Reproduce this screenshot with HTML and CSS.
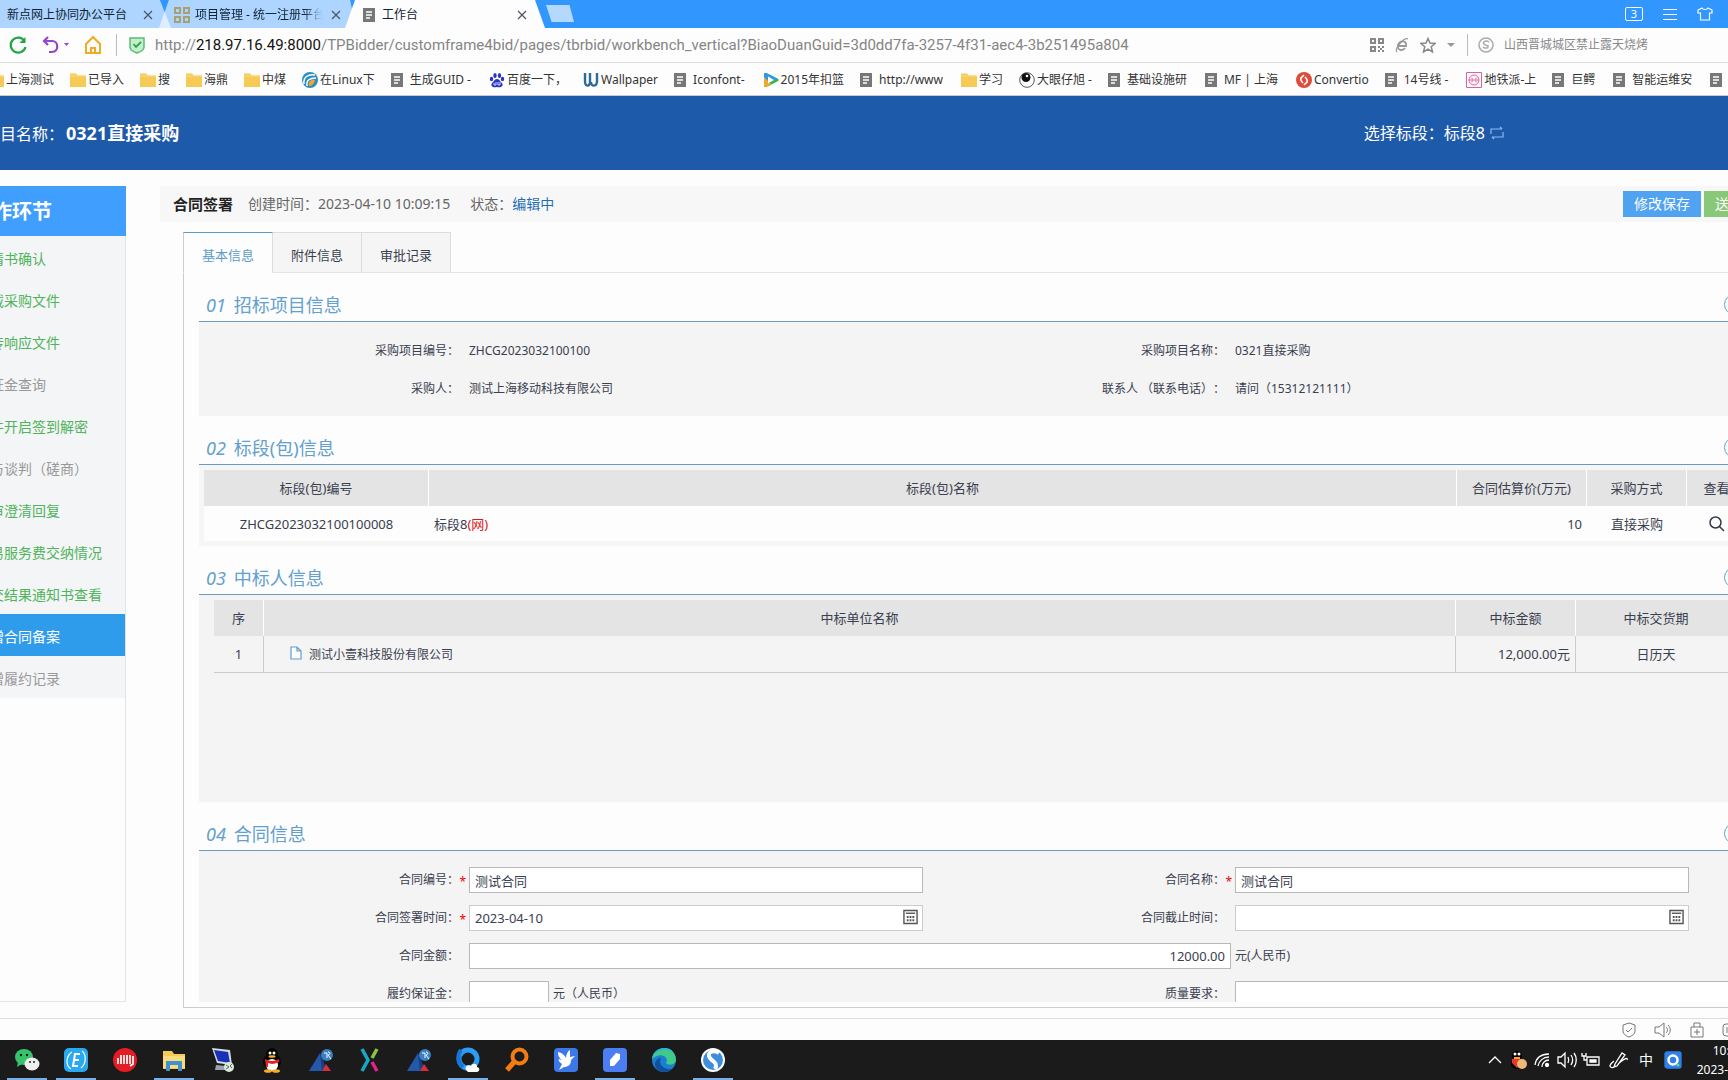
FILE: index.html
```html
<!DOCTYPE html>
<html lang="zh-CN">
<head>
<meta charset="utf-8">
<title>工作台</title>
<link rel="stylesheet" href="styles.css">
</head>
<body>
<svg class="defs" aria-hidden="true">
  <symbol id="doc" viewBox="0 0 16 16"><path d="M2 1h12v14H2z" fill="#777"/><path d="M5 5h6M5 8h6M5 11h4" stroke="#fff" stroke-width="1.4"/></symbol>
  <symbol id="folder" viewBox="0 0 16 16"><path d="M0 1.500h6l2 2h8V15H0z" fill="#f5cb55"/><path d="M0 4h16" stroke="#f9dc85"/></symbol>
  <symbol id="close" viewBox="0 0 10 10"><path d="M1 1l8 8M9 1L1 9" stroke="#4b5563" stroke-width="1.200" fill="none"/></symbol>
  <symbol id="cal" viewBox="0 0 16 16"><path d="M1 1h14v14H1z" fill="#fff" stroke="#555" stroke-width="1.500"/><path d="M3 4h10" stroke="#555" stroke-width="1.500"/><path d="M4 8h8M4 11.500h8" stroke="#555" stroke-width="2" stroke-dasharray="2 1"/></symbol>
  <symbol id="delta" viewBox="0 0 26 26"><path d="M1 24L12 6l7 18z" fill="#2458a8"/><path d="M12 6l7 18h-5z" fill="#173e80"/><path d="M14 24l4-7 5 7z" fill="#d5303c"/><circle cx="19" cy="8" r="6" fill="#3a7fc0"/><path d="M16 6h3v5M20 5c3 0 2 3 0 3l3 4" stroke="#fff" fill="none"/></symbol>
</svg>

<header class="browser">
  <div class="tabstrip">
    <div class="btab btab-first"><svg class="fav"><use href="#doc"/></svg><span>新点网上协同办公平台</span><button class="x" aria-label="关闭"><svg><use href="#close"/></svg></button></div>
    <div class="btab btab-second"><svg class="fav" viewBox="0 0 16 16" fill="none" stroke="#a8a070" stroke-width="2"><path d="M1 1h5v5H1zM10 1h5v5h-5zM1 10h5v5H1zM10 10h5v5h-5z"/></svg><span class="fade">项目管理 - 统一注册平台</span><button class="x" aria-label="关闭"><svg><use href="#close"/></svg></button></div>
    <div class="btab btab-active"><svg class="fav"><use href="#doc"/></svg><span>工作台</span><button class="x" aria-label="关闭"><svg><use href="#close"/></svg></button></div>
    <button class="newtab" aria-label="新标签"></button>
    <div class="wincontrols">
      <button class="count">3</button>
      <button aria-label="菜单"><svg width="14" height="14" viewBox="0 0 14 14" stroke="#fff"><path d="M0 2.500h14M0 7.500h14M0 12.500h14"/></svg></button>
      <button aria-label="皮肤"><svg width="16" height="14" viewBox="0 0 16 14" fill="none" stroke="#fff" stroke-width="1.200"><path d="M5 1L1 3v3h2.500v7h9V6H15V3l-4-2c-1 2-5 2-6 0z"/></svg></button>
    </div>
  </div>
  <div class="addressbar">
    <button aria-label="刷新"><svg width="20" height="20" viewBox="0 0 20 20" fill="none" stroke="#22a447" stroke-width="2.200"><path d="M16.500 6A7.500 7.500 0 1 0 17.500 12"/><path d="M17.500 2v6h-6z" fill="#22a447" stroke="none"/></svg></button>
    <button aria-label="撤销"><svg width="28" height="20" viewBox="0 0 28 20" fill="none" stroke="#9445c9" stroke-width="2.200"><path d="M6 2L2 6l4 4M2 6h8c7 0 7 11 0 11H7"/><path d="M22 8h5l-2.500 3z" fill="#9445c9" stroke="none"/></svg></button>
    <button aria-label="主页"><svg width="18" height="20" viewBox="0 0 18 20" fill="none" stroke="#f0ab25" stroke-width="2"><path d="M2 9l7-7 7 7v9H2zM7 18v-5h4v5"/></svg></button>
    <i class="vline"></i>
    <svg width="16" height="18" viewBox="0 0 16 18"><path d="M1 2h14v9c0 3-4 5-7 6-3-1-7-3-7-6z" fill="#c4efce" stroke="#58bd70" stroke-width="1.500"/><path d="M4.500 8L7 11l5-5" fill="none" stroke="#2fa34c" stroke-width="1.800"/></svg>
    <a class="url" href="#">http://<b>218.97.16.49:8000</b>/TPBidder/customframe4bid/pages/tbrbid/workbench_vertical?BiaoDuanGuid=3d0dd7fa-3257-4f31-aec4-3b251495a804</a>
    <div class="addr-tools">
      <svg width="14" height="14" viewBox="0 0 14 14" fill="none" stroke="#888" stroke-width="2"><path d="M1 1h4v4H1zM9 1h4v4H9zM1 9h4v4H1zM8 9h2M12 9h2M10 11h2M8 13h2M12 13h2"/></svg>
      <svg width="14" height="16" viewBox="0 0 14 16" fill="none" stroke="#999" stroke-width="1.800"><path d="M3 9h8c1-6-6-6-8-1-1 6 5 6 7 3"/><path d="M2 15C-1 12 9 0 13 2" stroke-width="1.200"/></svg>
      <svg width="16" height="16" viewBox="0 0 16 16" fill="none" stroke="#888" stroke-width="1.500"><path d="M8 1.500l2 4.500 5 .5-3.800 3.200L12.500 15 8 12.200 3.500 15l1.300-5.300L1 6.500 6 6z"/></svg>
      <svg width="8" height="6" viewBox="0 0 8 6"><path d="M0 1h8L4 5z" fill="#999"/></svg>
    </div>
    <div class="search">
      <svg width="16" height="16" viewBox="0 0 16 16" fill="none" stroke="#aaa" stroke-width="1.500"><circle cx="8" cy="8" r="7"/><path d="M11 5C8 3 4 5 6 7s5 1 4 3-4 1-5 0"/></svg>
      <input aria-label="搜索" value="山西晋城城区禁止露天烧烤">
    </div>
  </div>
  <nav class="bookmarks">
    <a href="#"><svg><use href="#folder"/></svg>上海测试</a>
    <a href="#"><svg><use href="#folder"/></svg>已导入</a>
    <a href="#"><svg><use href="#folder"/></svg>搜</a>
    <a href="#"><svg><use href="#folder"/></svg>海鼎</a>
    <a href="#"><svg><use href="#folder"/></svg>中煤</a>
    <a href="#"><svg viewBox="0 0 16 16"><circle cx="8" cy="8" r="8" fill="#2a8fc4"/><path d="M2 12C1 5 6 2 13 3M5 14C4 8 8 6 14 6" stroke="#fff" stroke-width="1.500" fill="none"/><path d="M7 14c-1-4 2-7 6-6-1 4-3 6-6 6z" fill="#f3a52c"/></svg>在Linux下</a>
    <a class="page" href="#"><svg><use href="#doc"/></svg>生成GUID -</a>
    <a href="#"><svg viewBox="0 0 16 16" fill="#2a35c8"><ellipse cx="6" cy="3.500" rx="1.700" ry="2.500"/><ellipse cx="10.500" cy="3.500" rx="1.700" ry="2.500"/><ellipse cx="2.500" cy="7" rx="1.700" ry="2.300"/><ellipse cx="13.500" cy="7" rx="1.700" ry="2.300"/><path d="M8 7c3 0 3 3 5 4 2 3-1 5-5 4-4 1-7-1-5-4 2-1 2-4 5-4z"/><path d="M7 10v3H5v-2M9 10v3h2v-3" stroke="#fff" fill="none" stroke-width=".8"/></svg>百度一下，</a>
    <a href="#"><svg viewBox="0 0 16 16" fill="none" stroke="#2d6a9c" stroke-width="2.400"><path d="M2 1v8c0 6 5 6 5 1V1M8 10c0 5 6 5 6-1V1"/></svg>Wallpaper</a>
    <a class="page" href="#"><svg><use href="#doc"/></svg>Iconfont-</a>
    <a href="#"><svg viewBox="0 0 16 16"><path d="M1 1.500C2 0 4 1 15 7c1 1 1 1 0 2C4 15 2 16 1 14.500z" fill="#35b24a"/><path d="M1 1.500C2 0 4 1 15 7l-4 1-10 2z" fill="#2b9be8"/><path d="M1 5v9.500C2 16 5 14 8 12z" fill="#f7a823"/><path d="M5 4.500v7L11 8z" fill="#fff"/></svg>2015年扣篮</a>
    <a class="page" href="#"><svg><use href="#doc"/></svg>http://www</a>
    <a href="#"><svg><use href="#folder"/></svg>学习</a>
    <a href="#"><svg viewBox="0 0 16 16"><circle cx="8" cy="8" r="7.300" fill="#fff" stroke="#555"/><circle cx="7" cy="5.500" r="4.500" fill="#111"/><circle cx="8" cy="4" r="1.300" fill="#fff"/></svg>大眼仔旭 -</a>
    <a class="page" href="#"><svg><use href="#doc"/></svg>基础设施研</a>
    <a class="page" href="#"><svg><use href="#doc"/></svg>MF | 上海</a>
    <a href="#"><svg viewBox="0 0 16 16"><circle cx="8" cy="8" r="8" fill="#dd4b3a"/><path d="M8 3L5 6c-1 2 0 3 2 5M8 13l3-3c1-2 0-3-2-5" stroke="#fff" stroke-width="1.700" fill="none"/></svg>Convertio</a>
    <a class="page" href="#"><svg><use href="#doc"/></svg>14号线 -</a>
    <a href="#"><svg viewBox="0 0 16 16" fill="none" stroke="#e0609a"><path d="M.5.5h15v15H.5z"/><circle cx="8" cy="8" r="5"/><path d="M6 5.500v5M10 5.500v5M6 8h4M3 8h2M11 8h2"/></svg>地铁派-上</a>
    <a class="page" href="#"><svg><use href="#doc"/></svg>巨鳄</a>
    <a class="page" href="#"><svg><use href="#doc"/></svg>智能运维安</a>
    <a class="page" href="#"><svg><use href="#doc"/></svg>长三角</a>
  </nav>
</header>

<div class="app">
  <header class="apphead">
    <div class="project">项目名称：<strong>0321直接采购</strong></div>
    <div class="lot">选择标段：标段8 <button aria-label="切换标段"><svg width="14" height="14" viewBox="0 0 14 14" fill="none" stroke="#8db9ee" stroke-width="1.200"><path d="M1 8V3h11M10 1l2 2M13 6v5H2M4 13l-2-2"/></svg></button></div>
  </header>

  <div class="workspace">
    <aside class="side">
      <h2>操作环节</h2>
      <nav>
        <a class="done" href="#">邀请书确认</a>
        <a class="done" href="#">下载采购文件</a>
        <a class="done" href="#">上传响应文件</a>
        <a href="#">保证金查询</a>
        <a class="done" href="#">文件开启签到解密</a>
        <a href="#">参与谈判（磋商）</a>
        <a class="done" href="#">评审澄清回复</a>
        <a class="done" href="#">交易服务费交纳情况</a>
        <a class="done" href="#">成交结果通知书查看</a>
        <a class="current" href="#">新增合同备案</a>
        <a href="#">新增履约记录</a>
      </nav>
    </aside>

    <main class="main">
      <div class="titlebar">
        <h1>合同签署</h1>
        <span>创建时间：2023-04-10 10:09:15</span>
        <span class="state">状态：<em>编辑中</em></span>
        <div class="actions"><button class="save">修改保存</button><button class="submit">送审</button></div>
      </div>
      <div class="ptabs">
        <button class="on">基本信息</button><button>附件信息</button><button>审批记录</button>
      </div>
      <div class="panel">
        <div class="scroll">
          <section>
            <h3><i>01</i>招标项目信息<button class="fold" aria-label="收起"></button></h3>
            <dl class="form">
              <dt>采购项目编号：</dt><dd>ZHCG2023032100100</dd>
              <dt>采购项目名称：</dt><dd>0321直接采购</dd>
              <dt>采购人：</dt><dd>测试上海移动科技有限公司</dd>
              <dt>联系人 （联系电话）：</dt><dd>请问（15312121111）</dd>
            </dl>
          </section>
          <section>
            <h3><i>02</i>标段(包)信息<button class="fold" aria-label="收起"></button></h3>
            <div class="lots">
              <table>
                <colgroup><col class="c-code"><col><col class="c-price"><col class="c-way"><col class="c-view"></colgroup>
                <thead><tr><th>标段(包)编号</th><th>标段(包)名称</th><th>合同估算价(万元)</th><th>采购方式</th><th>查看</th></tr></thead>
                <tbody><tr><td class="mid">ZHCG2023032100100008</td><td>标段8<span class="net">(网)</span></td><td class="end">10</td><td class="mid">直接采购</td><td class="mid"><button aria-label="查看"><svg width="16" height="16" viewBox="0 0 16 16" fill="none" stroke="#333a48" stroke-width="1.500"><circle cx="6.500" cy="6.500" r="5.500"/><path d="M10.500 10.500L15 15"/></svg></button></td></tr></tbody>
              </table>
            </div>
          </section>
          <section>
            <h3><i>03</i>中标人信息<button class="fold" aria-label="收起"></button></h3>
            <div class="winners">
              <table>
                <colgroup><col class="c-no"><col><col class="c-sum"><col class="c-date"></colgroup>
                <thead><tr><th>序</th><th>中标单位名称</th><th>中标金额</th><th>中标交货期</th></tr></thead>
                <tbody><tr><td class="mid">1</td><td class="company"><svg width="12" height="14" viewBox="0 0 12 14" fill="#fff" stroke="#5b9fd0" stroke-width="1.200"><path d="M1 1h6l4 4v8H1zM7 1v4h4"/></svg>测试小壹科技股份有限公司</td><td class="end">12,000.00元</td><td class="mid">日历天</td></tr></tbody>
              </table>
              <div class="pager">…</div>
            </div>
          </section>
          <section>
            <h3><i>04</i>合同信息<button class="fold" aria-label="收起"></button></h3>
            <form class="form">
              <label for="no">合同编号：<b>*</b></label><div class="field"><input id="no" value="测试合同"></div>
              <label for="name">合同名称：<b>*</b></label><div class="field"><input id="name" value="测试合同"></div>
              <label for="sign">合同签署时间：<b>*</b></label><div class="field date"><input id="sign" value="2023-04-10"><svg><use href="#cal"/></svg></div>
              <label for="end">合同截止时间：</label><div class="field date"><input id="end"><svg><use href="#cal"/></svg></div>
              <label for="sum">合同金额：</label><div class="field amount"><input id="sum" value="12000.00"></div><span class="unit">元(人民币)</span>
              <label for="bond">履约保证金：</label><div class="field bond"><input id="bond"><span>元（人民币）</span></div>
              <label for="quality">质量要求：</label><div class="field full"><input id="quality"></div>
            </form>
          </section>
        </div>
      </div>
    </main>
  </div>
</div>

<div class="statusbar">
  <svg width="16" height="16" viewBox="0 0 16 16"><path d="M8 1l6 2v6c0 3-3 5-6 6-3-1-6-3-6-6V3zM5 8l2 2 4-4"/></svg>
  <svg width="18" height="16" viewBox="0 0 18 16"><path d="M1 5h4l5-4v14l-5-4H1zM12 5c2 2 2 4 0 6M14 3c3 3 3 7 0 10"/></svg>
  <svg width="16" height="16" viewBox="0 0 16 16"><path d="M2 5h12v10H2zM5 5V1h6v4M8 7v6M5 10h6"/></svg>
  <svg width="16" height="16" viewBox="0 0 16 16"><rect x="1" y="2" width="14" height="12" rx="3"/><path d="M5 5v6"/></svg>
</div>

<footer class="taskbar">
  <div class="tasks">
    <button class="run" aria-label="微信"><svg viewBox="0 0 26 26"><ellipse cx="10" cy="10" rx="9" ry="8" fill="#35c46b"/><path d="M4 15l-1 5 5-3z" fill="#35c46b"/><ellipse cx="18" cy="17" rx="7.500" ry="6.500" fill="#eee"/><g fill="#222"><circle cx="7" cy="8" r="1.200"/><circle cx="13" cy="8" r="1.200"/><circle cx="16" cy="15" r="1"/><circle cx="20" cy="15" r="1"/></g></svg></button>
    <button class="run" aria-label="E"><svg viewBox="0 0 26 26"><rect x="1" y="1" width="24" height="24" rx="5" fill="#28a9f0"/><path d="M17 7h-5l-2 12h5M11 13h5" stroke="#fff" stroke-width="2" fill="none"/><path d="M9 5c-7 5-6 14-1 17M18 21c6-5 5-14 1-17" stroke="#fff" stroke-width="1.200" fill="none"/></svg></button>
    <button aria-label="红色应用"><svg viewBox="0 0 26 26"><circle cx="13" cy="13" r="12" fill="#e51c23"/><path d="M6 11v6M9 8v9M12 8v9M15 8v9M18 8v9M21 9v8l-3 2" stroke="#fff" stroke-width="1.700" fill="none"/></svg></button>
    <button class="run" aria-label="文件资源管理器"><svg viewBox="0 0 26 26"><path d="M2 4h9l2 3h11v15H2z" fill="#f6cb55"/><path d="M2 9h22v12H2z" fill="#fbdc7c"/><path d="M5 24V14h16v10h-4v-6H9v6z" fill="#3e93d0"/></svg></button>
    <button aria-label="远程桌面"><svg viewBox="0 0 26 26"><path d="M2 1l18 2 2 15-15-2z" fill="#d5dae0"/><path d="M4 3l14 2 2 11-12-2z" fill="#1732b8"/><path d="M6 18l10 1 3 4H5z" fill="#9aa3ad"/><circle cx="19" cy="20" r="5" fill="#dfe6df"/><path d="M16 18l3 2-3 2M22 17l-2 2 2 2" stroke="#4a7a4a" fill="none"/></svg></button>
    <button aria-label="QQ"><svg viewBox="0 0 26 26"><ellipse cx="13" cy="15" rx="9" ry="8" fill="#060606"/><ellipse cx="13" cy="8" rx="6" ry="7" fill="#060606"/><ellipse cx="13" cy="18" rx="6" ry="6" fill="#fff"/><circle cx="11" cy="6" r="1.500" fill="#fff"/><circle cx="15" cy="6" r="1.500" fill="#fff"/><ellipse cx="13" cy="9.500" rx="3.500" ry="1.300" fill="#f7ae24"/><path d="M6 12q7 4 14 0v3q-4 2-7 2l-4-1v4H7z" fill="#e52222"/><ellipse cx="9" cy="24" rx="4" ry="1.800" fill="#f7ae24"/><ellipse cx="17" cy="24" rx="4" ry="1.800" fill="#f7ae24"/></svg></button>
    <button aria-label="开发工具"><svg><use href="#delta"/></svg></button>
    <button aria-label="X"><svg viewBox="0 0 26 26" fill="none" stroke-width="3.500"><path d="M5 2l6 11-6 11" stroke="#18a7c4"/><path d="M20 2l-5 9" stroke="#8bc53f"/><path d="M15 15l5 9" stroke="#e6228e"/></svg></button>
    <button aria-label="开发工具"><svg><use href="#delta"/></svg></button>
    <button class="run" aria-label="浏览器"><svg viewBox="0 0 26 26"><circle cx="13" cy="12" r="9" fill="none" stroke="#2a9df4" stroke-width="5"/><path d="M6 3C2 8 3 16 8 20" fill="none" stroke="#1575d8" stroke-width="4"/><path d="M12 24c-4-4 1-7 4-5 2-4 7-2 6 1 4 1 2 5 0 5h-9z" fill="#fff"/></svg></button>
    <button aria-label="搜索"><svg viewBox="0 0 26 26" fill="none" stroke="#f57c12"><circle cx="15.500" cy="9.500" r="7" stroke-width="4"/><path d="M10 15l-7 8" stroke-width="5"/></svg></button>
    <button aria-label="飞鸟"><svg viewBox="0 0 26 26"><rect x="1" y="1" width="24" height="24" rx="4" fill="#3c78e8"/><path d="M5 5c5 1 7 4 8 6 0-4 2-7 4-8v7l5-1-4 4c0 5-3 7-7 7l-5 3 3-6c-3-2-4-4-3-5l3 1C6 11 5 9 5 5z" fill="#fff"/></svg></button>
    <button class="run" aria-label="笔记"><svg viewBox="0 0 26 26"><rect x="1" y="1" width="24" height="24" rx="4" fill="#4d7df2"/><path d="M8 19v-6l6-7 4 1v5l-6 7z" fill="#fff"/></svg></button>
    <button aria-label="Edge"><svg viewBox="0 0 26 26"><circle cx="13" cy="13" r="12" fill="#1b7fd0"/><path d="M1 12C3-3 25-2 25 13c0 5-8 6-10 3 4-6-6-12-14-4z" fill="#3fc98a"/><path d="M1 11C4-1 19-1 22 5c-8-4-17-2-21 6z" fill="#2cb5d5"/><path d="M10 11c-3 6 2 12 11 11C12 29 3 22 4 16c1-3 3-5 6-5z" fill="#12509e"/></svg></button>
    <button class="run" aria-label="搜狗浏览器"><svg viewBox="0 0 26 26"><circle cx="13" cy="13" r="12" fill="#fff"/><circle cx="13" cy="13" r="10" fill="#3d8edb"/><path d="M19 6C13 2 6 6 10 11s8 5 5 11" stroke="#fff" stroke-width="4" fill="none"/></svg></button>
  </div>
  <div class="tray">
    <svg viewBox="0 0 20 20"><path d="M4 13l6-6 6 6"/></svg>
    <svg viewBox="0 0 20 20" stroke="none"><ellipse cx="8" cy="6" rx="5" ry="5" fill="#000" stroke="none"/><ellipse cx="8" cy="14" rx="6" ry="5" fill="#000" stroke="none"/><circle cx="6" cy="4" r="1.500" fill="#fff" stroke="none"/><circle cx="10" cy="4" r="1.500" fill="#fff" stroke="none"/><path d="M3 9h10v3l-5 6-5-5z" fill="#e43a2c" stroke="none"/><circle cx="13" cy="14" r="5" fill="#f0b878" stroke="none"/><path d="M5 7h6v2H5z" fill="#f6a81c" stroke="none"/></svg>
    <svg viewBox="0 0 20 20"><path d="M2 15C3 8 8 4 16 4M5 16c1-5 5-9 11-9M9 17c0-4 3-7 7-7"/><circle cx="14" cy="15" r="1.500" fill="#fff"/></svg>
    <svg viewBox="0 0 20 20"><path d="M1 7h3l4-4v14l-4-4H1zM11 7c1 2 1 4 0 6M14 5c2 3 2 7 0 10M17 3c3 4 3 10 0 14"/></svg>
    <svg viewBox="0 0 20 20"><path d="M6 7h12v8H6zM1 3v3h4V3M3 6v4h3"/><path d="M9 10h6v2H9z" fill="#fff"/></svg>
    <svg class="pen" viewBox="0 0 20 20"><path d="M6 14L13 3l3 2-8 11-3 1zM9 14c7-6 10-7 9-4M5 11c-8 6-2 8 2 5"/></svg>
    <span class="ime">中</span>
    <svg viewBox="0 0 20 20"><rect x="2" y="2" width="16" height="16" rx="2" fill="#2f80e8" stroke="#2f80e8"/><circle cx="10" cy="10" r="4.500" fill="none" stroke="#fff" stroke-width="2.500"/><circle cx="15" cy="15" r="1.500" fill="#4fe08a" stroke="none"/></svg>
    <time class="clock">10:10<br>2023-04-10</time>
  </div>
</footer>
</body>
</html>
```

FILE: styles.css
```css
* { box-sizing: border-box; }

body {
  margin: 0;
  height: 100vh;
  display: flex;
  flex-direction: column;
  overflow: hidden;
  background: #fdfdfd;
  color: #39404f;
  font: 12px/16px "Noto Sans", "Noto Sans CJK SC", sans-serif;
  text-spacing-trim: space-all;
}

button { padding: 0; border: 0; background: none; font: inherit; color: inherit; display: flex; align-items: center; justify-content: center; }
input { font: inherit; color: inherit; border: 0; background: none; outline: 0; }
a { color: inherit; text-decoration: none; }
h1, h2, h3, dl, dd { margin: 0; }
svg { flex: none; }
.defs { display: none; }

/* browser chrome */
.browser { flex: none; color: #333; }
.tabstrip { display: flex; height: 28px; background: #3296ff; }
.btab { display: flex; align-items: center; gap: 5px; height: 28px; padding-top: 2px; background: rgba(255, 255, 255, .6); color: #123; white-space: nowrap; }
.btab .fav { width: 16px; height: 16px; }
.btab .x { margin-left: auto; }
.btab .x svg { width: 10px; height: 10px; }
.btab-first { width: 185px; margin-left: -14px; padding-right: 18px; clip-path: polygon(0 0, 94% 0, 100% 100%, 0 100%); }
.btab-second { width: 197px; margin-left: -12px; padding-right: 15px; padding-left: 15px; clip-path: polygon(5% 0, 97% 0, 100% 100%, 0 100%); }
.btab-active { width: 200px; margin-left: -11px; padding-right: 18px; padding-left: 16px; background: #fdfdfd; clip-path: polygon(5% 0, 95% 0, 100% 100%, 0 100%); }
.fade { width: 128px; overflow: hidden; mask-image: linear-gradient(90deg, #000 85%, transparent); }
.newtab { width: 28px; height: 17px; margin: 5px 0 0 1px; background: #b5d8ff; clip-path: polygon(0 0, 84% 0, 100% 100%, 20% 100%); }
.wincontrols { margin-left: auto; display: flex; align-items: center; gap: 20px; padding-right: 15px; color: #fff; }
.count { width: 18px; height: 14px; border: 1px solid #fff; border-radius: 2px; font-size: 11px; line-height: 12px; }

.addressbar { display: flex; align-items: center; height: 35px; padding-left: 8px; border-bottom: 1px solid #ddd; background: #fdfdfd; }
.addressbar button { margin-right: 14px; }
.vline { width: 1px; height: 22px; margin-right: 12px; background: #bbb; }
.url { margin-left: 10px; color: #858585; font-family: Roboto, "Noto Sans", sans-serif; font-size: 15px; line-height: 20px; white-space: nowrap; }
.url b { font-weight: 400; color: #111; }
.addr-tools { margin-left: auto; display: flex; align-items: center; gap: 11px; padding-right: 12px; }
.search { display: flex; align-items: center; gap: 10px; width: 261px; height: 22px; padding-left: 10px; border-left: 1px solid #bbb; }
.search input { width: 200px; padding: 0; color: #888; }

.bookmarks { display: flex; gap: 16px; height: 33px; margin-left: -12px; padding-top: 1px; border-bottom: 1px solid #ccc; white-space: nowrap; overflow: hidden; }
.bookmarks a { display: flex; align-items: center; gap: 2px; flex: none; }
.bookmarks svg { width: 16px; height: 16px; }
.bookmarks .page { gap: 5px; margin-left: -2px; padding-right: 2px; }

/* application; its left and right edges run past the window */
.app { flex: 1; min-height: 0; display: flex; flex-direction: column; margin: 0 -41px 0 -44px; }
.apphead { flex: none; display: flex; align-items: center; height: 74px; padding: 0 265px 0 28px; background: #1e5aaa; color: #fff; font-size: 16px; line-height: 24px; }
.project strong { margin-left: 2px; font-size: 18px; }
.lot { margin-left: auto; display: flex; align-items: center; gap: 5px; }

.workspace { flex: 1; min-height: 0; display: flex; gap: 34px; padding: 16px 0 10px; }
.side { flex: none; width: 170px; margin-bottom: 6px; border: solid #e2e4e6; border-width: 0 1px 1px 0; }
.side h2 { margin-right: -1px; padding: 2px 0 0 16px; background: #409eff; color: #fff; font-size: 20px; line-height: 48px; }
.side a { display: block; height: 42px; padding-left: 20px; background: #f4f5f7; color: #999; font-size: 14px; line-height: 45px; }
.side a.done { color: #4fb45a; }
.side a.current { background: #2f9ceb; color: #fff; }

.main { flex: 1; min-width: 0; display: flex; flex-direction: column; }
.titlebar { flex: none; display: flex; align-items: center; gap: 15px; height: 36px; padding: 0 15px 0 13px; background: #f7f7f7; color: #666; font-size: 14px; }
.titlebar h1 { color: #222; font-size: 15px; }
.titlebar em { font-style: normal; color: #1f6fb5; }
.state { margin-left: 5px; }
.actions { margin-left: auto; display: flex; gap: 3px; color: #fff; }
.actions button { height: 26px; padding: 0 11px; }
.save { background: #4fa3f0; }
.submit { background: #88c878; }

.ptabs { flex: none; display: flex; margin: 10px 0 0 23px; height: 41px; }
.ptabs button { width: 89px; padding-top: 4px; border: 1px solid #ddd; border-left-width: 0; background: #f5f5f5; font-size: 13px; }
.ptabs .on { width: 90px; border-color: #5b9cc9 #ddd #fdfdfd #ccc; border-left-width: 1px; background: none; color: #5b9ccb; position: relative; z-index: 1; }

.panel { flex: 1; min-height: 0; display: flex; margin: -1px 0 0 23px; padding: 0 16px 5px 15px; border: 1px solid #ccc; border-top-color: #e3e3e3; }
.scroll { flex: 1; min-width: 0; overflow: hidden; }

h3 { display: flex; align-items: center; gap: 8px; height: 49px; padding: 15px 7px 0; border-bottom: 1px solid #6a9cc0; color: #62a0cf; font-size: 18px; font-weight: 400; }
.fold { width: 21px; height: 21px; margin-left: auto; border: 1px solid #62a0cf; border-radius: 50%; }

.form { display: grid; grid-template-columns: 270px 1fr 270px 1fr; gap: 12px 0; padding: 16px 21px 14px 0; background: #f4f4f4; }
.form dt, .form label { display: block; padding-right: 10px; text-align: right; line-height: 26px; position: relative; }
.form dd { line-height: 26px; }
.form label b { position: absolute; right: 3px; top: 2px; color: #e00; font-weight: 400; }
.field { position: relative; padding-right: 42px; }
.field input { width: 100%; height: 26px; padding: 0 5px; border: 1px solid #b8b8b8; background: #fff; font-size: 13px; }
.field.date input { border-color: #ccc; }
.field svg { position: absolute; right: 47px; top: 4px; width: 15px; height: 16px; }
.field.amount { grid-column: span 2; padding-right: 4px; }
.field.amount input { text-align: right; }
.unit { line-height: 26px; }
.field.bond { display: flex; align-items: center; gap: 4px; }
.field.bond input { width: 80px; }
.field.full { padding-right: 0; }

table { width: 100%; table-layout: fixed; border-collapse: separate; border-spacing: 0; font-size: 13px; }
th { height: 36px; padding: 0; border-right: 1px solid #fff; background: #e4e4e4; font-weight: 400; }
td { height: 35px; padding: 0 5px; }
td button { margin: auto; }
.mid { text-align: center; }
.end { text-align: right; }
.net { color: #e01818; }
.c-code { width: 225px; }
.c-price { width: 130px; }
.c-way { width: 100px; }
.c-view { width: 60px; }
.lots { padding: 5px; background: #f6f6f6; }
.lots td { background: #fdfdfd; }
.winners { display: flex; flex-direction: column; min-height: 207px; padding: 5px 15px; background: #f4f4f4; }
.winners td { height: 37px; border: solid #ccc; border-width: 0 1px 1px 0; }
.c-no { width: 50px; }
.c-sum { width: 120px; }
.c-date { width: 161px; }
.company { font-size: 12px; padding-left: 26px; }
.company svg { margin-right: 7px; vertical-align: -1px; }
.pager { margin-top: auto; text-align: right; }

.statusbar { flex: none; display: flex; align-items: center; justify-content: flex-end; gap: 17px; height: 22px; margin-right: -10px; border-top: 1px solid #ddd; }
.statusbar svg { fill: none; stroke: #777; }

/* taskbar */
.taskbar { flex: none; display: flex; height: 40px; background: #1b1b1b; color: #fff; }
.tasks { display: flex; padding-left: 2px; }
.tasks button { width: 49px; background: linear-gradient(#76b0e8, #76b0e8) center bottom / 0 2px no-repeat; }
.tasks .run { background-size: 40px 2px; }
.tasks svg { width: 26px; height: 26px; }
.tray { margin: 0 -41px 0 auto; display: flex; align-items: center; gap: 4px; }
.tray svg { width: 20px; height: 20px; fill: none; stroke: #fff; stroke-width: 1.3; }
.tray .pen { margin-left: 4px; }
.ime { width: 26px; text-align: center; font-size: 14px; }
.clock { width: 82px; text-align: center; line-height: 19px; }
```
